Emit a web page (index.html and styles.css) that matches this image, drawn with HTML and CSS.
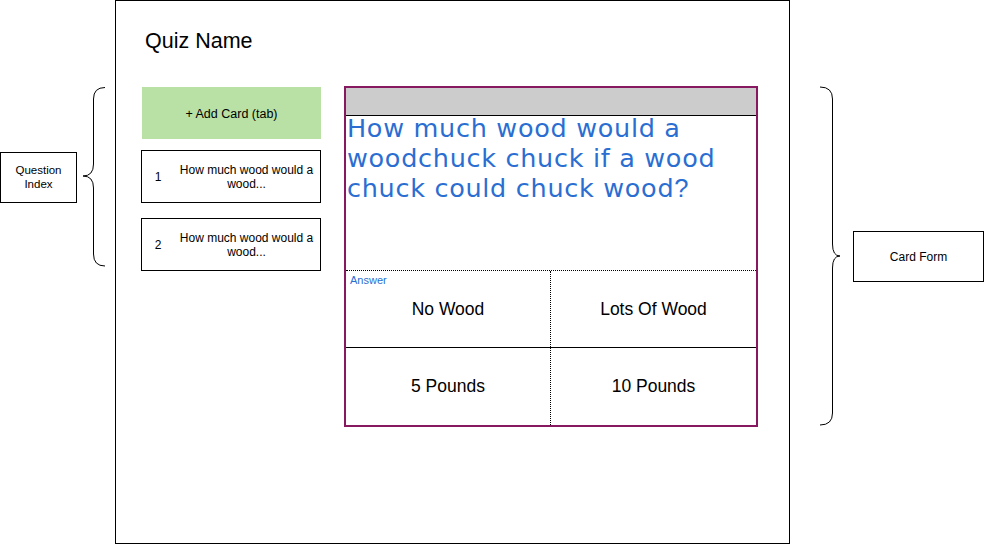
FILE: index.html
```html
<!DOCTYPE html>
<html lang="en">
<head>
<meta charset="utf-8">
<title>Quiz Builder Wireframe</title>
<link rel="stylesheet" href="styles.css">
</head>
<body>
<div class="page">
  <div class="annot annot-left">
    <div class="annot-row">
      <div class="note note-index">Question<br>Index</div>
      <svg class="brace brace-left" width="24" height="180" viewBox="0 0 24 180">
        <path d="M23,0.5 Q11.5,0.5 11.5,12 L11.5,77 Q11.5,89 1,89 Q11.5,89 11.5,101 L11.5,167 Q11.5,179 23,179" fill="none" stroke="#000" stroke-width="1"/>
      </svg>
    </div>
  </div>

  <div class="frame">
    <div class="title">Quiz Name</div>
    <div class="content">
      <div class="sidebar">
        <div class="add-card">+ Add Card (tab)</div>
        <div class="items">
          <div class="item">
            <div class="item-num">1</div>
            <div class="item-text">How much wood would a wood...</div>
          </div>
          <div class="item">
            <div class="item-num">2</div>
            <div class="item-text">How much wood would a wood...</div>
          </div>
        </div>
      </div>

      <div class="card">
        <div class="card-head"></div>
        <div class="question">
          <div class="question-text">How much wood would a woodchuck chuck if a wood chuck could chuck wood<span class="qmark">?</span></div>
        </div>
        <div class="answers">
          <div class="answer-label">Answer</div>
          <div class="cell cell-left">No Wood</div>
          <div class="cell">Lots Of Wood</div>
          <div class="cell cell-left cell-bottom">5 Pounds</div>
          <div class="cell cell-bottom">10 Pounds</div>
        </div>
      </div>
    </div>
  </div>

  <div class="annot annot-right">
    <div class="annot-row">
      <svg class="brace brace-right" width="26" height="341" viewBox="0 0 26 341">
        <path d="M2,1 Q14.5,1 14.5,13 L14.5,158 Q14.5,170 22,170 Q14.5,170 14.5,182 L14.5,327 Q14.5,339 2,339" fill="none" stroke="#000" stroke-width="1"/>
      </svg>
      <div class="note note-form">Card Form</div>
    </div>
  </div>
</div>
</body>
</html>
```

FILE: styles.css
```css
* {
  box-sizing: border-box;
}

html, body {
  margin: 0;
  padding: 0;
  background: #ffffff;
}

body {
  font-family: "Liberation Sans", Arial, Helvetica, sans-serif;
  color: #000;
}

.page {
  width: 984px;
  height: 544px;
  display: flex;
  overflow: hidden;
}

/* annotations */
.annot {
  flex: none;
}

.annot-left {
  width: 115px;
  padding-top: 87px;
}

.annot-right {
  width: 194px;
  padding-top: 86px;
}

.annot-row {
  display: flex;
  align-items: center;
}

.note {
  border: 1px solid #000;
  display: flex;
  align-items: center;
  justify-content: center;
  text-align: center;
  background: #fff;
}

.note-index {
  width: 77px;
  height: 51px;
  font-size: 11.5px;
  line-height: 14px;
}

.brace {
  display: block;
  flex: none;
}

.brace-left {
  margin-left: 5px;
}

.brace-right {
  margin-left: 28px;
}

.note-form {
  width: 132px;
  height: 51px;
  margin-left: 9px;
  font-size: 12px;
}

/* main frame */
.frame {
  flex: none;
  width: 675px;
  height: 544px;
  border: 1px solid #000;
  padding: 28px 0 0 25px;
}

.title {
  font-size: 21.5px;
  line-height: 24px;
  padding-left: 4px;
}

.content {
  display: flex;
  align-items: flex-start;
  gap: 23px;
  margin-top: 33px;
}

/* sidebar */
.sidebar {
  width: 180px;
  margin-top: 1px;
}

.add-card {
  height: 52px;
  margin-left: 1px;
  background: #b9e0a5;
  display: flex;
  align-items: center;
  justify-content: center;
  font-size: 12.5px;
  padding-top: 2px;
}

.items {
  display: flex;
  flex-direction: column;
  gap: 15px;
  margin-top: 11px;
}

.item {
  height: 53px;
  border: 1px solid #000;
  display: flex;
  align-items: center;
}

.item-num {
  width: 32px;
  text-align: center;
  font-size: 12px;
}

.item-text {
  flex: 1;
  text-align: center;
  font-size: 12px;
  line-height: 14px;
  padding-right: 1px;
}

/* card form */
.card {
  width: 414px;
  height: 341px;
  border: 2px solid #86195f;
  display: flex;
  flex-direction: column;
}

.card-head {
  height: 28px;
  background: #cccccc;
  border-bottom: 1px solid #000;
  flex: none;
}

.question {
  height: 154px;
  flex: none;
  overflow: hidden;
  padding-left: 1px;
}

.question-text {
  margin-top: -3px;
  font-family: "DejaVu Sans", Verdana, sans-serif;
  font-size: 25.5px;
  letter-spacing: 0.7px;
  line-height: 30px;
  color: #2b6ed2;
}

.qmark {
  font-family: "Liberation Sans", Arial, sans-serif;
  letter-spacing: 0;
}

.answers {
  position: relative;
  flex: 1;
  border-top: 1px dotted #000;
  display: grid;
  grid-template-columns: 205px 1fr;
  grid-template-rows: 76px 1fr;
}

.answer-label {
  position: absolute;
  top: 3px;
  left: 4px;
  font-size: 11px;
  line-height: 13px;
  color: #2b6ed2;
}

.cell {
  display: flex;
  align-items: center;
  justify-content: center;
  font-size: 17.5px;
}

.cell-left {
  border-right: 1px dotted #000;
}

.cell-bottom {
  border-top: 1px solid #000;
}
```
